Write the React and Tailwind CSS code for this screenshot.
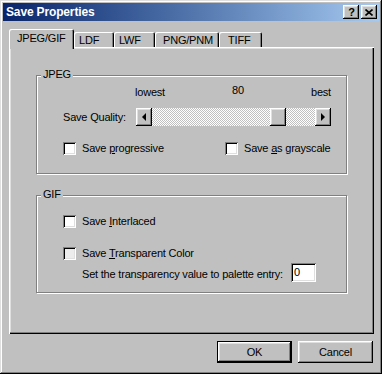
const raised =
  "shadow-[inset_-1px_-1px_#000,inset_1px_1px_#fff,inset_-2px_-2px_#808080,inset_2px_2px_#dfdfdf]";
const sunken =
  "shadow-[inset_1px_1px_#808080,inset_-1px_-1px_#fff,inset_2px_2px_#000,inset_-2px_-2px_#dfdfdf]";
const etched = "border border-[#808080] shadow-[inset_1px_1px_#fff,1px_1px_#fff]";
const tabEdge =
  "shadow-[inset_1px_1px_#fff,inset_-1px_0_#000,inset_-2px_0_#808080] rounded-t-[2px]";

const Check = ({ children, className = "", dim = false }) => (
  <div className={`flex items-center ${className}`}>
    <span className={`w-[13px] h-[13px] shrink-0 ${dim ? "bg-[#ececec]" : "bg-white"} ${sunken}`} />
    <span className="ml-[6px]">{children}</span>
  </div>
);

const Arrow = ({ dir }) => (
  <svg width="4" height="8" viewBox="0 0 4 8">
    <polygon points={dir === "left" ? "4,0 4,8 0,4" : "0,0 0,8 4,4"} fill="#000" />
  </svg>
);

const Tab = ({ label, w, pl, active }) => (
  <div
    className={`${tabEdge} bg-[#c0c0c0] ${
      active ? "relative z-10 h-[20px] -mb-[2px] pt-[3px]" : "h-[15px] pt-[2px]"
    }`}
    style={{ width: w, paddingLeft: pl }}
  >
    {label}
  </div>
);

export default function App() {
  return (
    <div className="w-[382px] h-[374px] bg-[#c0c0c0] p-[3px] flex flex-col text-black text-[11px] leading-[13px] tracking-[-0.2px] font-['Liberation_Sans',Arial,sans-serif] shadow-[inset_-1px_-1px_#000,inset_1px_1px_#dfdfdf,inset_-2px_-2px_#808080,inset_2px_2px_#fff]">
      {/* title bar */}
      <div className="h-[18px] flex items-center bg-linear-to-r from-[#0a246a] to-[#a6caf0] pl-[3px] pr-[2px]">
        <span className="text-white font-bold text-[12px] tracking-[-0.15px] flex-1">Save Properties</span>
        <div className="flex gap-[2px]">
          <div className={`w-[16px] h-[14px] bg-[#c0c0c0] ${raised} flex items-center justify-center font-bold text-[11px] leading-none pl-px`}>
            ?
          </div>
          <div className={`w-[16px] h-[14px] bg-[#c0c0c0] ${raised} flex items-center justify-center`}>
            <svg width="8" height="7" viewBox="0 0 8 7">
              <path d="M0.5 0.5L7.5 6.5M7.5 0.5L0.5 6.5" stroke="#000" strokeWidth="1.6" />
            </svg>
          </div>
        </div>
      </div>

      <div className="mt-[8px] pl-[6px] pr-[5px] flex flex-col">
        {/* tabs */}
        <div className="flex items-end h-[18px]">
          <Tab label="JPEG/GIF" w={65} pl={8} active />
          <Tab label="LDF" w={40} pl={5} />
          <Tab label="LWF" w={41} pl={5} />
          <Tab label="PNG/PNM" w={64} pl={8} />
          <Tab label="TIFF" w={43} pl={9} />
        </div>

        {/* panel */}
        <div className="h-[287px] pt-[28px] px-[27px] shadow-[inset_1px_1px_#fff,inset_-1px_-1px_#000,inset_-2px_-2px_#808080,inset_2px_2px_#dfdfdf]">
          {/* JPEG group */}
          <div className={`relative h-[99px] ${etched}`}>
            <span className="absolute -top-[8px] left-[4px] bg-[#c0c0c0] px-[2px]">JPEG</span>
            <div className="pt-[10px] ml-[98px] w-[196px] flex justify-between">
              <span>lowest</span>
              <span className="-mt-[2px]">80</span>
              <span>best</span>
            </div>
            <div className="mt-[9px] ml-[26px] flex items-center">
              <span className="w-[73px]">Save Quality:</span>
              <div className="w-[195px] h-[18px] flex">
                <div className={`w-[16px] h-full bg-[#c0c0c0] ${raised} flex items-center justify-center`}>
                  <Arrow dir="left" />
                </div>
                <div className="flex-1 flex bg-[image:repeating-conic-gradient(#fff_0_25%,#c0c0c0_0_50%)] bg-[length:2px_2px]">
                  <div className="w-[118px]" />
                  <div className={`w-[16px] h-full bg-[#c0c0c0] ${raised}`} />
                </div>
                <div className={`w-[16px] h-full bg-[#c0c0c0] ${raised} flex items-center justify-center`}>
                  <Arrow dir="right" />
                </div>
              </div>
            </div>
            <div className="mt-[16px] ml-[26px] flex">
              <Check className="w-[162px]">
                Save <u>p</u>rogressive
              </Check>
              <Check>
                Save <u>a</u>s grayscale
              </Check>
            </div>
          </div>

          {/* GIF group */}
          <div className={`relative mt-[21px] h-[98px] ${etched}`}>
            <span className="absolute -top-[8px] left-[4px] bg-[#c0c0c0] px-[2px]">GIF</span>
            <Check className="mt-[19px] ml-[26px]">
              Save <u>I</u>nterlaced
            </Check>
            <Check className="mt-[19px] ml-[26px]" dim>
              Save <u>T</u>ransparent Color
            </Check>
            <div className="mt-[3px] ml-[45px] flex items-center">
              <span className="w-[209px] pt-[4px]">Set the transparency value to palette entry:</span>
              <div className={`w-[25px] h-[19px] bg-white ${sunken} pl-[3px] flex items-center`}>0</div>
            </div>
          </div>
        </div>

        {/* buttons */}
        <div className="mt-[7px] pr-[1px] flex justify-end gap-[6px]">
          <div className="w-[75px] h-[22px] border border-black">
            <div className={`w-full h-full ${raised} flex items-center justify-center`}>OK</div>
          </div>
          <div className={`w-[75px] h-[22px] ${raised} flex items-center justify-center`}>Cancel</div>
        </div>
      </div>
    </div>
  );
}
